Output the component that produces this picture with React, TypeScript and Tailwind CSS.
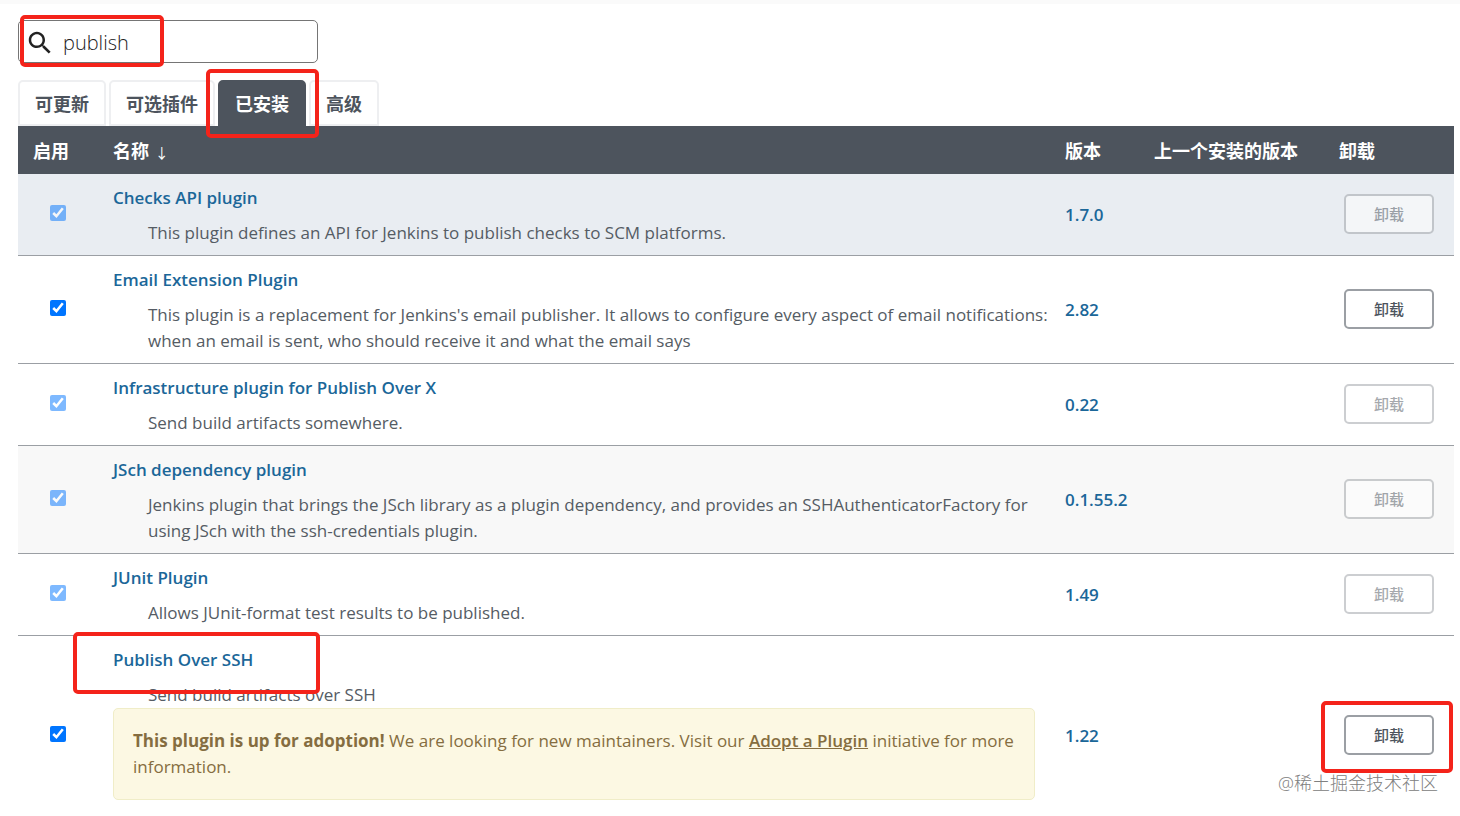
import { useState } from "react";
import type { ReactNode } from "react";
import clsx from "clsx";

interface Plugin {
  id: string;
  name: string;
  description: string;
  version: string;
  locked: boolean;
  rowClass?: string;
  adoption?: boolean;
  marked?: boolean;
}

const plugins: Plugin[] = [
  {
    id: "checks-api",
    name: "Checks API plugin",
    description:
      "This plugin defines an API for Jenkins to publish checks to SCM platforms.",
    version: "1.7.0",
    locked: true,
    rowClass: "bg-[#e9edf2]",
  },
  {
    id: "email-ext",
    name: "Email Extension Plugin",
    description:
      "This plugin is a replacement for Jenkins's email publisher. It allows to configure every aspect of email notifications: when an email is sent, who should receive it and what the email says",
    version: "2.82",
    locked: false,
  },
  {
    id: "publish-over",
    name: "Infrastructure plugin for Publish Over X",
    description: "Send build artifacts somewhere.",
    version: "0.22",
    locked: true,
  },
  {
    id: "jsch",
    name: "JSch dependency plugin",
    description:
      "Jenkins plugin that brings the JSch library as a plugin dependency, and provides an SSHAuthenticatorFactory for using JSch with the ssh-credentials plugin.",
    version: "0.1.55.2",
    locked: true,
    rowClass: "bg-[#f8f8f8]",
  },
  {
    id: "junit",
    name: "JUnit Plugin",
    description: "Allows JUnit-format test results to be published.",
    version: "1.49",
    locked: true,
  },
  {
    id: "publish-over-ssh",
    name: "Publish Over SSH",
    description: "Send build artifacts over SSH",
    version: "1.22",
    locked: false,
    adoption: true,
    marked: true,
  },
];

const tabs = ["可更新", "可选插件", "已安装", "高级"];

// Red frame drawn over whatever it highlights
function Marker({ className }: { className: string }) {
  return (
    <span
      aria-hidden="true"
      className={clsx(
        "pointer-events-none absolute z-10 rounded-[5px] border-4 border-[#f4231a]",
        className,
      )}
    />
  );
}

function SearchBox() {
  const [query, setQuery] = useState("publish");

  return (
    <div className="relative h-[43px] w-[300px]">
      <svg
        viewBox="0 0 24 24"
        className="absolute top-2 left-[7px] size-[30px] fill-[#222]"
        aria-hidden="true"
      >
        <path d="M15.5 14h-.79l-.28-.27C15.41 12.59 16 11.11 16 9.5 16 5.91 13.09 3 9.5 3S3 5.91 3 9.5 5.91 16 9.5 16c1.61 0 3.09-.59 4.23-1.57l.27.28v.79l5 4.99L20.49 19l-4.99-5zm-6 0C7.01 14 5 11.99 5 9.5S7.01 5 9.5 5 14 7.01 14 9.5 11.99 14 9.5 14z" />
      </svg>
      <input
        type="text"
        aria-label="搜索"
        value={query}
        onChange={(e) => setQuery(e.target.value)}
        className="size-full rounded-[5px] border border-[#757575] pt-[2px] pr-3 pl-11 text-[20px] font-light text-[#222] outline-none"
      />
      <Marker className="-top-[5px] left-[2px] h-[52px] w-36" />
    </div>
  );
}

function TabBar() {
  const [active, setActive] = useState("已安装");

  return (
    <div className="mt-[17px] flex gap-[3px]" role="tablist">
      {tabs.map((tab) => (
        <div key={tab} className="relative">
          <button
            type="button"
            role="tab"
            aria-selected={tab === active}
            onClick={() => setActive(tab)}
            className={clsx(
              "h-[46px] rounded-t-[5px] border-2 px-[15px] pt-[2px] text-[18px] leading-6 font-bold",
              tab === active
                ? "border-[#4d545d] bg-[#4d545d] text-white"
                : "border-[#eeeff1] bg-white text-[#4d545d]",
            )}
          >
            {tab}
          </button>
          {tab === "已安装" && (
            <Marker className="-top-[11px] -left-3 h-[69px] w-[113px]" />
          )}
        </div>
      ))}
    </div>
  );
}

function HeaderCell({
  children,
  className,
}: {
  children: ReactNode;
  className?: string;
}) {
  return (
    <th
      scope="col"
      className={clsx(
        "h-12 px-[15px] pt-[2px] text-left text-[18px] font-bold whitespace-nowrap",
        className,
      )}
    >
      {children}
    </th>
  );
}

function AdoptionNotice() {
  return (
    <div className="mb-[26px] rounded-[5px] border border-[#f0edc8] bg-[#fcf8e3] p-[19px] text-[#856d40]">
      <strong className="font-bold">This plugin is up for adoption!</strong> We
      are looking for new maintainers. Visit our{" "}
      <a href="#adopt" className="font-semibold underline">
        Adopt a Plugin
      </a>{" "}
      initiative for more information.
    </div>
  );
}

function PluginRow({ plugin }: { plugin: Plugin }) {
  const [enabled, setEnabled] = useState(true);

  return (
    <tr className={clsx("border-b border-[#9b9fa4]", plugin.rowClass)}>
      <td className="px-[15px] text-center">
        <input
          type="checkbox"
          aria-labelledby={plugin.id}
          checked={enabled}
          aria-disabled={plugin.locked}
          onChange={() => !plugin.locked && setEnabled(!enabled)}
          className={clsx(
            "mb-[6px] inline-block size-4 align-middle",
            plugin.locked && "opacity-50",
          )}
        />
      </td>
      <td className="px-[15px] pt-[11px] pb-[9px]">
        <div className="relative">
          <a
            id={plugin.id}
            href={`#${plugin.id}`}
            className="font-semibold text-[#1b6799]"
          >
            {plugin.name}
          </a>
          {plugin.marked && (
            <Marker className="-top-[15px] -left-10 h-[62px] w-[247px]" />
          )}
        </div>
        <p className="-mr-[15px] mt-[9px] pl-[35px]">{plugin.description}</p>
        {plugin.adoption && <AdoptionNotice />}
      </td>
      <td className="px-[15px]">
        <a
          href={`#${plugin.id}-version`}
          className="font-semibold text-[#1b6799]"
        >
          {plugin.version}
        </a>
      </td>
      <td />
      <td className="pb-[2px]">
        <div className="relative mx-auto h-10 w-[90px]">
          <button
            type="button"
            disabled={plugin.locked}
            className="size-full rounded-[5px] border-2 border-[#9b9fa4] bg-white text-[15px] font-medium text-[#4d545d] disabled:opacity-50"
          >
            卸载
          </button>
          {plugin.marked && (
            <Marker className="-top-[14px] -left-[23px] h-[72px] w-[132px]" />
          )}
        </div>
      </td>
    </tr>
  );
}

export default function App() {
  return (
    <div className="relative h-screen overflow-hidden bg-white font-['Open_Sans','Noto_Sans_CJK_SC',sans-serif] text-[17px] leading-[26px] text-[#555c64]">
      <div className="h-1 bg-[#fafafa]" />
      <main className="pt-4 pr-[6px] pl-[18px]">
        <SearchBox />
        <TabBar />
        <table className="w-full table-fixed border-collapse">
          <thead className="bg-[#4d545d] text-white">
            <tr>
              <HeaderCell className="w-20">启用</HeaderCell>
              <HeaderCell>
                名称 <span className="ml-px text-sm font-normal">↓</span>
              </HeaderCell>
              <HeaderCell className="w-[89px]">版本</HeaderCell>
              <HeaderCell className="w-[185px]">上一个安装的版本</HeaderCell>
              <HeaderCell className="w-[130px]">卸载</HeaderCell>
            </tr>
          </thead>
          <tbody>
            {plugins.map((plugin) => (
              <PluginRow key={plugin.id} plugin={plugin} />
            ))}
          </tbody>
        </table>
      </main>
      <div className="absolute right-[22px] bottom-[21px] text-[18px] leading-6 font-light text-[#808080]">
        @稀土掘金技术社区
      </div>
    </div>
  );
}
